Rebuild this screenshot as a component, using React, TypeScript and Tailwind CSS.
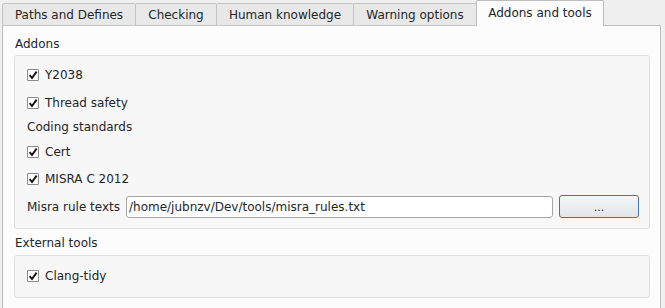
import React from "react";

type Tab = { label: string; w: string; active?: boolean };

const tabs: Tab[] = [
  { label: "Paths and Defines", w: "w-[134px]" },
  { label: "Checking", w: "w-[82px]" },
  { label: "Human knowledge", w: "w-[138px]" },
  { label: "Warning options", w: "w-[124px]" },
  { label: "Addons and tools", w: "w-[128px]", active: true },
];

function Check({ label }: { label: string }) {
  return (
    <div className="flex items-center h-[22px] pl-[12px]">
      <span className="w-[12px] h-[12px] border border-[#8c8c8c] bg-white rounded-[1px] flex items-center justify-center">
        <svg width="10" height="10" viewBox="0 0 10 10">
          <path d="M1.6 5.2 L4 8 L8.6 1.6" fill="none" stroke="#111" strokeWidth="1.9" />
        </svg>
      </span>
      <span className="ml-[6px]">{label}</span>
    </div>
  );
}

export default function App() {
  return (
    <div className="w-[665px] h-[308px] overflow-hidden bg-[#efefef] font-['DejaVu_Sans',sans-serif] text-[12px] text-[#232629]">
      {/* Tab bar */}
      <div className="flex items-end h-[26px] pl-[2px] relative z-10">
        {tabs.map((t, i) =>
          t.active ? (
            <div
              key={t.label}
              className={`${t.w} ${i > 0 ? "-ml-px" : ""} h-[26px] bg-[#fcfcfc] border border-b-0 border-[#bdbdbd] rounded-t-[2px] flex items-center justify-center pb-[2px]`}
            >
              {t.label}
            </div>
          ) : (
            <div
              key={t.label}
              className={`${t.w} ${i > 0 ? "-ml-px" : ""} h-[23px] bg-[#e8e8e8] border border-[#c4c4c4] rounded-t-[2px] flex items-center justify-center`}
            >
              {t.label}
            </div>
          )
        )}
      </div>

      {/* Pane */}
      <div className="-mt-px ml-[2px] w-[659px] h-[300px] bg-[#fcfcfc] border border-[#bdbdbd] pl-[11px] pr-[9px]">
        <div className="h-[18px] mt-[9px] flex items-center pl-px">Addons</div>
        <div className="mt-[2px] w-[636px] bg-[#f7f7f7] border border-[#dedede] rounded-[3px] pt-[8px] pb-[10px]">
          <Check label="Y2038" />
          <div className="mt-[6px]">
            <Check label="Thread safety" />
          </div>
          <div className="mt-[2px] h-[22px] flex items-center pl-[12px]">Coding standards</div>
          <div className="mt-[3px]">
            <Check label="Cert" />
          </div>
          <div className="mt-[5px]">
            <Check label="MISRA C 2012" />
          </div>
          <div className="mt-[5px] flex items-center h-[23px] pl-[12px]">
            <span className="w-[99px]">Misra rule texts</span>
            <div className="w-[427px] h-[22px] bg-white border border-[#a6a6a6] rounded-[3px] flex items-center pl-[2px]">
              /home/jubnzv/Dev/tools/misra_rules.txt
            </div>
            <button className="ml-[6px] w-[80px] h-[23px] rounded-[3px] border border-[#3d7aaa] bg-gradient-to-b from-[#f4f6f8] to-[#e1e5ea] flex items-center justify-center text-[11px] leading-none pt-[2px]">
              ...
            </button>
          </div>
        </div>
        <div className="h-[18px] mt-[5px] flex items-center pl-px">External tools</div>
        <div className="mt-[3px] w-[636px] bg-[#f7f7f7] border border-[#dedede] rounded-[3px] pt-[9px] pb-[10px]">
          <Check label="Clang-tidy" />
        </div>
      </div>
    </div>
  );
}
